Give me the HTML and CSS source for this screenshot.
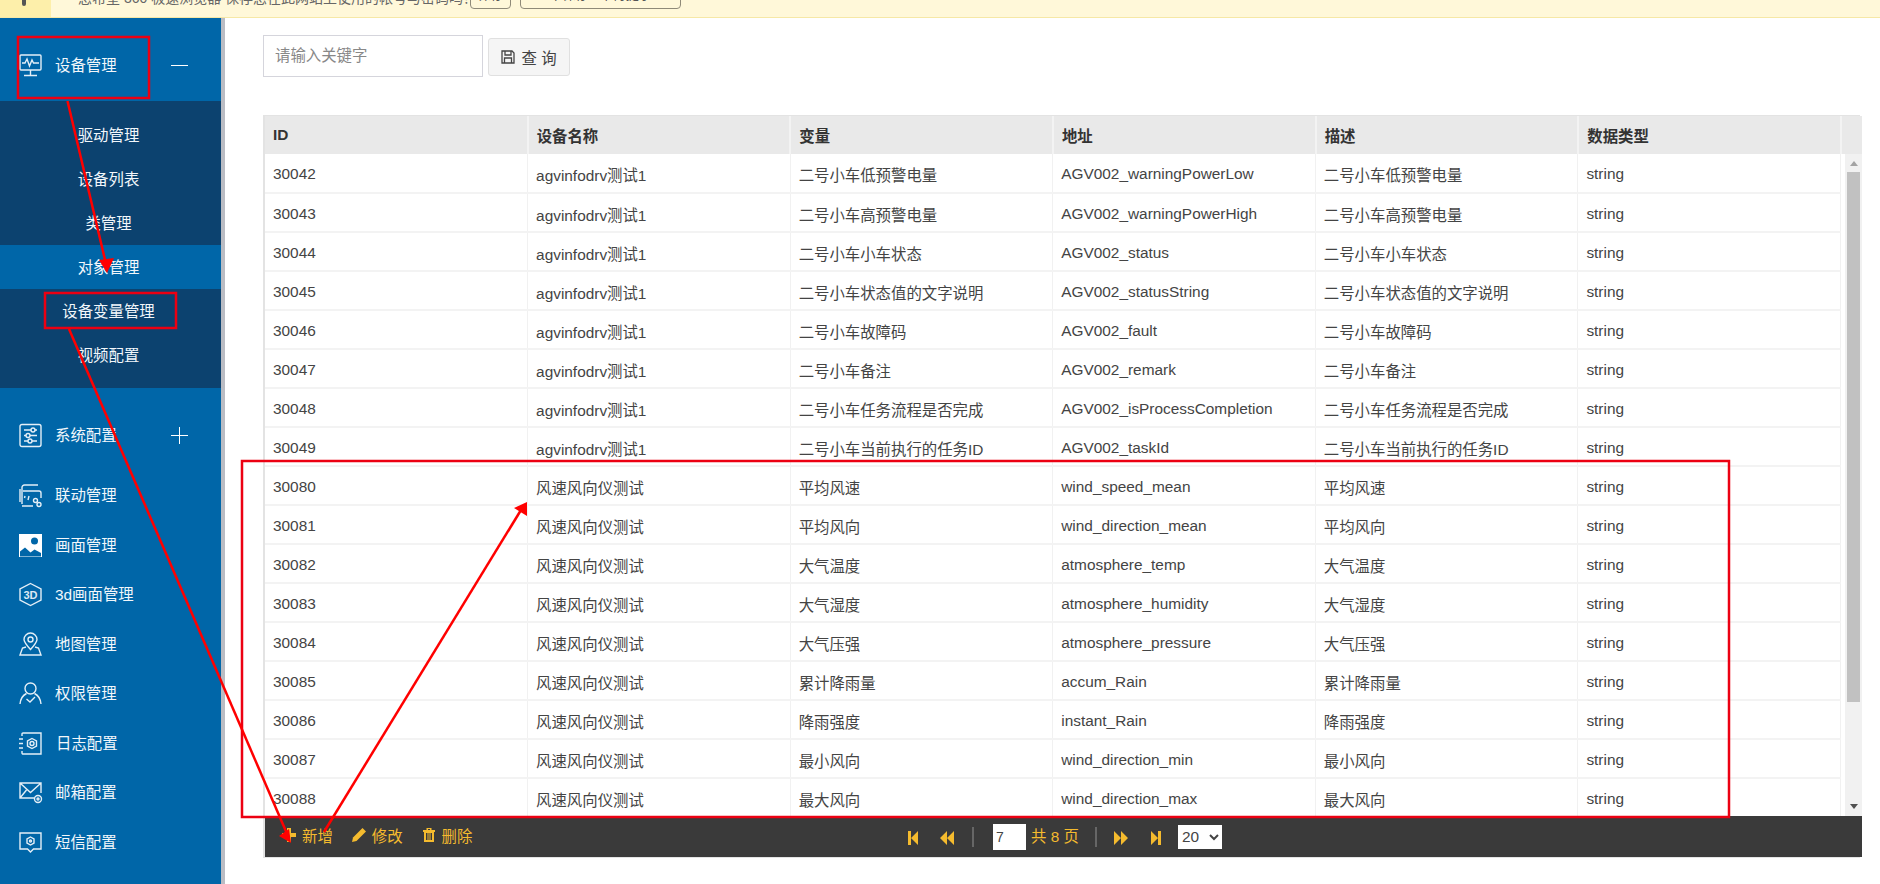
FILE: index.html
```html
<!DOCTYPE html>
<html lang="zh-CN">
<head>
    <meta charset="UTF-8">
    <meta name="viewport" content="width=device-width, initial-scale=1.0">
    <title>设备变量管理</title>
    <link rel="stylesheet" href="styles.css">
</head>
<body>
    <div class="aviso">
        <div class="aviso-icono"><span class="aviso-clip"></span></div>
        <div class="aviso-texto">您希望 360 极速浏览器 保存您在此网站上使用的帐号与密码吗？</div>
        <button class="aviso-boton aviso-corto">保存</button>
        <button class="aviso-boton aviso-largo">不保存 · 不再提示</button>
    </div>

    <div class="principal">
        <div class="menu">
            <div class="grupo">
                <svg class="icono" viewBox="0 0 23 23"><path d="M2 1h19a1 1 0 0 1 1 1v13a1 1 0 0 1-1 1H2a1 1 0 0 1-1-1V2a1 1 0 0 1 1-1zM11.500 16v5M5 21.500h13M3 9h3l2-4 2.500 7 2.500-6 1.500 3H20"/></svg>
                <span class="rotulo">设备管理</span>
                <span class="signo signo-menos"></span>
            </div>
            <div class="submenu">
                <div class="subitem">驱动管理</div>
                <div class="subitem">设备列表</div>
                <div class="subitem">类管理</div>
                <div class="subitem activo">对象管理</div>
                <div class="subitem">设备变量管理</div>
                <div class="subitem">视频配置</div>
            </div>
            <div class="grupo">
                <svg class="icono" viewBox="0 0 23 23"><path d="M3 0.500h17a2 2 0 0 1 2 2v18a2 2 0 0 1-2 2H3a2 2 0 0 1-2-2v-18a2 2 0 0 1 2-2zM5 6h13M5 11.500h13M5 17h13"/><circle class="relleno" cx="14" cy="6" r="2"/><circle class="relleno" cx="9" cy="11.500" r="2"/><circle class="relleno" cx="11" cy="17" r="2"/></svg>
                <span class="rotulo">系统配置</span>
                <span class="signo signo-mas"></span>
            </div>
            <div class="item">
                <svg class="icono" viewBox="0 0 23 23"><path d="M3 20V3.500A2.500 2.500 0 0 1 5.500 1H19M1 18V5M4 7h16a2 2 0 0 1 2 2v5M3 22h11M10 12l-1 4M6 12l-.5 2"/><circle cx="16.500" cy="16.500" r="2"/><circle cx="20" cy="20.500" r="2"/></svg>
                <span class="rotulo">联动管理</span>
            </div>
            <div class="item">
                <svg class="icono" viewBox="0 0 23 23"><path class="lleno" d="M0 0h23v23H0z"/><circle class="hueco" cx="15.500" cy="7" r="3.500"/><path class="hueco" d="M1 17.500l5-4 5.500 5 4-3 6.500 3.500v3.500H1z"/></svg>
                <span class="rotulo">画面管理</span>
            </div>
            <div class="item">
                <svg class="icono" viewBox="0 0 23 23"><path d="M11.500 0.500l10.500 5.500v11l-10.500 5.500L1 17V6z"/><text class="icono-3d" x="11.500" y="16">3D</text></svg>
                <span class="rotulo">3d画面管理</span>
            </div>
            <div class="item">
                <svg class="icono" viewBox="0 0 23 23"><path d="M11.500 16.500C7 11.500 5 9 5 6.500a6.500 6.500 0 0 1 13 0c0 2.500-2 5-6.500 10zM7 14l-3.500 1L1 22h21l-2.500-7L16 14"/><circle cx="11.500" cy="6.500" r="2.500"/></svg>
                <span class="rotulo">地图管理</span>
            </div>
            <div class="item">
                <svg class="icono" viewBox="0 0 23 23"><circle cx="11.500" cy="6.500" r="5.500"/><path d="M7.500 11.500C3.500 13.500 1.500 16 1 22M15.500 11.500c4 2 6 4.500 6.500 10.500M7.500 17l3.500 3 5-5"/></svg>
                <span class="rotulo">权限管理</span>
            </div>
            <div class="item">
                <svg class="icono" viewBox="0 0 23 23"><path d="M3 4V2a1 1 0 0 1 1-1h18v21H4a1 1 0 0 1-1-1v-2M0 7h4M0 11.500h4M0 16h4M13 6.500l4.500 2.500v5l-4.500 2.500L8.500 14V9z"/><circle cx="13" cy="11.500" r="2"/></svg>
                <span class="rotulo item-ajuste">日志配置</span>
            </div>
            <div class="item">
                <svg class="icono" viewBox="0 0 23 23"><path d="M15 17H1V2h21v10M1 2l10.500 9.500L22 2M1 17l6.500-8"/><circle cx="19" cy="18" r="3.500"/><circle cx="19" cy="18" r="1"/></svg>
                <span class="rotulo">邮箱配置</span>
            </div>
            <div class="item">
                <svg class="icono" viewBox="0 0 23 23"><path d="M1 2h21v16h-7.500l-3 3-3-3H1z"/><path d="M11.500 6l3.500 2v4l-3.500 2L8 12V8z"/><circle cx="11.500" cy="10" r="1"/></svg>
                <span class="rotulo">短信配置</span>
            </div>
        </div>

        <div class="contenido">
            <div class="busqueda">
                <input class="campo" type="text" placeholder="请输入关键字">
                <button class="boton-consulta">
                    <svg class="icono-disco" viewBox="0 0 14 14"><path d="M1 1h10l2 2v10H1zM4 1v4h6V1M3.500 13V8h7v5"/></svg>
                    查 询
                </button>
            </div>

            <div class="rejilla">
                <table class="cabecera">
                    <tr>
                        <th>ID</th>
                        <th>设备名称</th>
                        <th>变量</th>
                        <th>地址</th>
                        <th>描述</th>
                        <th>数据类型</th>
                        <th class="celda-vacia"></th>
                    </tr>
                </table>
                <div class="cuerpo">
                    <table class="filas">
                        <tr><td>30042</td><td>agvinfodrv测试1</td><td>二号小车低预警电量</td><td>AGV002_warningPowerLow</td><td>二号小车低预警电量</td><td>string</td></tr>
                        <tr><td>30043</td><td>agvinfodrv测试1</td><td>二号小车高预警电量</td><td>AGV002_warningPowerHigh</td><td>二号小车高预警电量</td><td>string</td></tr>
                        <tr><td>30044</td><td>agvinfodrv测试1</td><td>二号小车小车状态</td><td>AGV002_status</td><td>二号小车小车状态</td><td>string</td></tr>
                        <tr><td>30045</td><td>agvinfodrv测试1</td><td>二号小车状态值的文字说明</td><td>AGV002_statusString</td><td>二号小车状态值的文字说明</td><td>string</td></tr>
                        <tr><td>30046</td><td>agvinfodrv测试1</td><td>二号小车故障码</td><td>AGV002_fault</td><td>二号小车故障码</td><td>string</td></tr>
                        <tr><td>30047</td><td>agvinfodrv测试1</td><td>二号小车备注</td><td>AGV002_remark</td><td>二号小车备注</td><td>string</td></tr>
                        <tr><td>30048</td><td>agvinfodrv测试1</td><td>二号小车任务流程是否完成</td><td>AGV002_isProcessCompletion</td><td>二号小车任务流程是否完成</td><td>string</td></tr>
                        <tr><td>30049</td><td>agvinfodrv测试1</td><td>二号小车当前执行的任务ID</td><td>AGV002_taskId</td><td>二号小车当前执行的任务ID</td><td>string</td></tr>
                        <tr><td>30080</td><td>风速风向仪测试</td><td>平均风速</td><td>wind_speed_mean</td><td>平均风速</td><td>string</td></tr>
                        <tr><td>30081</td><td>风速风向仪测试</td><td>平均风向</td><td>wind_direction_mean</td><td>平均风向</td><td>string</td></tr>
                        <tr><td>30082</td><td>风速风向仪测试</td><td>大气温度</td><td>atmosphere_temp</td><td>大气温度</td><td>string</td></tr>
                        <tr><td>30083</td><td>风速风向仪测试</td><td>大气湿度</td><td>atmosphere_humidity</td><td>大气湿度</td><td>string</td></tr>
                        <tr><td>30084</td><td>风速风向仪测试</td><td>大气压强</td><td>atmosphere_pressure</td><td>大气压强</td><td>string</td></tr>
                        <tr><td>30085</td><td>风速风向仪测试</td><td>累计降雨量</td><td>accum_Rain</td><td>累计降雨量</td><td>string</td></tr>
                        <tr><td>30086</td><td>风速风向仪测试</td><td>降雨强度</td><td>instant_Rain</td><td>降雨强度</td><td>string</td></tr>
                        <tr><td>30087</td><td>风速风向仪测试</td><td>最小风向</td><td>wind_direction_min</td><td>最小风向</td><td>string</td></tr>
                        <tr><td>30088</td><td>风速风向仪测试</td><td>最大风向</td><td>wind_direction_max</td><td>最大风向</td><td>string</td></tr>
                    </table>
                    <div class="barra">
                        <span class="flecha-arriba"></span>
                        <span class="barra-pulgar"></span>
                        <span class="flecha-abajo"></span>
                    </div>
                </div>
                <div class="pie">
                    <div class="acciones">
                        <span class="accion">
                            <svg class="icono-pie" viewBox="0 0 14 14"><path d="M5 0h4v5h5v4H9v5H5V9H0V5h5z"/></svg>
                            新增
                        </span>
                        <span class="accion">
                            <svg class="icono-pie" viewBox="0 0 14 14"><path d="M10.500 0l3.500 3.500-9.500 9.500L0 14l1-4.500z"/></svg>
                            修改
                        </span>
                        <span class="accion">
                            <svg class="icono-pie" viewBox="0 0 14 14"><path fill-rule="evenodd" d="M4.500 0h5v2H13v2h-1v10H2V4H1V2h3.500zM6 1v1h2V1zM4 5v7h1.500V5zM6.500 5v7h1V5zM8.500 5v7H10V5z"/></svg>
                            删除
                        </span>
                    </div>
                    <div class="paginador">
                        <svg class="icono-pag pag-primero" viewBox="0 0 10 14"><path d="M0 0h3v14H0zM10 0v14L3 7z"/></svg>
                        <svg class="icono-pag pag-doble" viewBox="0 0 14 14"><path d="M7 0v14L0 7zM14 0v14L7 7z"/></svg>
                        <span class="separador"></span>
                        <input class="pagina" type="text" value="7">
                        <span class="total">共 8 页</span>
                        <span class="separador separador-fin"></span>
                        <svg class="icono-pag pag-doble" viewBox="0 0 14 14"><path d="M0 0v14l7-7zM7 0v14l7-7z"/></svg>
                        <svg class="icono-pag pag-ultimo" viewBox="0 0 10 14"><path d="M0 0v14l7-7zM7 0h3v14H7z"/></svg>
                        <select class="tamano"><option>20</option></select>
                    </div>
                    <div></div>
                </div>
            </div>
        </div>
    </div>

    <!-- marcas rojas dibujadas encima de la captura -->
    <svg class="marcas" viewBox="0 0 1880 884">
        <rect x="18" y="37" width="131" height="61"/>
        <rect x="45" y="293" width="131" height="35"/>
        <rect x="242" y="461" width="1487" height="356"/>
        <path d="M67.500 101L106 264"/>
        <path d="M69 329L288 836"/>
        <path d="M324 832L521 510"/>
        <polygon points="107,273 99,260 114,258"/>
        <polygon points="291,843 279,836 289,829"/>
        <polygon points="527,502 514,508 527,516"/>
    </svg>
</body>
</html>
```

FILE: styles.css
```css
* {
    box-sizing: border-box;
}

body {
    font-family: "Liberation Sans", "Noto Sans CJK SC", sans-serif;
    font-size: 15.4px;
    background-color: #fff;
    margin: 0;
    padding: 0;
    color: #444;
    width: 1880px;
    height: 884px;
    overflow: hidden;
    display: flex;
    flex-direction: column;
    position: relative;
}

/* aviso de arriba, casi todo cortado */
.aviso {
    height: 18px;
    flex: none;
    display: flex;
    align-items: flex-end;
    background-color: #fff8d9;
    border-bottom: 1px solid #f6e8a6;
    overflow: hidden;
    color: #666;
}

.aviso-icono {
    width: 51px;
    height: 17px;
    flex: none;
    background-color: #fdefaa;
    display: flex;
    justify-content: center;
}

.aviso-clip {
    width: 4px;
    height: 6px;
    background-color: #555;
    border-radius: 0 0 2px 2px;
    margin-right: 3px;
}

.aviso-texto {
    margin: 0 0 9px 27px;
    width: 392px;
    white-space: nowrap;
    overflow: hidden;
    font-size: 14px;
    line-height: 20px;
}

.aviso-boton {
    height: 28px;
    margin-bottom: 8px;
    padding: 0;
    font: inherit;
    font-size: 13px;
    line-height: 20px;
    color: #555;
    background-color: #fff8d9;
    border: 1px solid #8f8a78;
    border-radius: 4px;
    overflow: hidden;
    white-space: nowrap;
}

.aviso-corto {
    width: 41px;
    margin-left: 0;
}

.aviso-largo {
    width: 161px;
    margin-left: 9px;
}

.principal {
    flex: 1;
    display: flex;
    min-height: 0;
}

/* menu lateral */
.menu {
    width: 225px;
    flex: none;
    background-color: #0066a8;
    border-right: 4px solid #babcc3;
    color: #f2f7fb;
}

.grupo {
    height: 83px;
    padding: 11px 0 0 19px;
    display: flex;
    align-items: center;
    position: relative;
}

.item {
    height: 49.5px;
    padding-left: 19px;
    display: flex;
    align-items: center;
}

.rotulo {
    padding-bottom: 3px;
}

.icono {
    width: 23px;
    height: 23px;
    margin-right: 13px;
    flex: none;
    fill: none;
    stroke: #e4eff7;
    stroke-width: 1.4;
    overflow: visible;
}

.icono .relleno {
    fill: #0066a8;
}

.icono .lleno {
    fill: #fff;
    stroke: none;
}

.icono .hueco {
    fill: #0066a8;
    stroke: none;
}

.icono-3d {
    font-size: 11px;
    font-weight: bold;
    text-anchor: middle;
    fill: #dbe9f3;
    stroke: none;
}

.item-ajuste {
    margin-left: 1px;
}

.signo {
    position: absolute;
    left: 171px;
    top: 47px;
    width: 17px;
    height: 1px;
    background-color: #fff;
}

.signo-mas::after {
    content: "";
    position: absolute;
    left: 8px;
    top: -8px;
    width: 1px;
    height: 17px;
    background-color: #fff;
}

.submenu {
    height: 287px;
    background-color: #0c426f;
    padding-top: 12px;
}

.subitem {
    height: 44px;
    line-height: 46px;
    text-align: center;
    padding-right: 4px;
}

.subitem.activo {
    background-color: #0066a8;
}

/* contenido */
.contenido {
    flex: 1;
    min-width: 0;
    padding: 17px 0 0 38px;
}

.busqueda {
    display: flex;
    align-items: flex-start;
    gap: 5px;
}

.campo {
    width: 220px;
    height: 42px;
    padding: 0 11px;
    border: 1px solid #d5d5dc;
    font: inherit;
    color: #444;
    outline: none;
}

.campo::placeholder {
    color: #888;
}

.boton-consulta {
    width: 82px;
    height: 38px;
    margin-top: 3px;
    padding: 0;
    background-color: #f5f5f5;
    border: 1px solid #e0e0e0;
    border-radius: 3px;
    font: inherit;
    color: #444;
    display: flex;
    align-items: center;
    justify-content: center;
    gap: 6px;
}

.icono-disco {
    width: 14px;
    height: 14px;
    fill: none;
    stroke: #444;
    stroke-width: 1.3;
}

.rejilla {
    width: 1597px;
    height: 743px;
    margin-top: 38px;
    border-top: 1px solid #e3e3e3;
    border-left: 2px solid #e3e3e3;
    border-bottom: 1px solid #e3e3e3;
}

table {
    border-collapse: collapse;
    table-layout: fixed;
}

.cabecera {
    width: 1597px;
    background-color: #e9e9e9;
}

th {
    width: 262.67px;
    height: 38px;
    padding: 0 8px;
    text-align: left;
    font-weight: bold;
    color: #333;
    border-right: 2px solid #f3f3f3;
}

th.celda-vacia {
    width: 21px;
    padding: 0;
    border-right: none;
}

.cuerpo {
    width: 1597px;
    height: 662px;
    display: flex;
    overflow: hidden;
}

.filas {
    width: 1576px;
    flex: none;
    align-self: flex-start;
}

td {
    height: 39px;
    padding: 2px 8px 0;
    border-right: 1px solid #f1f1f1;
    border-bottom: 2px solid #f3f3f3;
    white-space: nowrap;
}

.barra {
    width: 17px;
    margin-left: 4px;
    background-color: #f1f1f1;
    display: flex;
    flex-direction: column;
    align-items: center;
}

.flecha-arriba {
    margin: 7px 0 6px;
    border: 4px solid transparent;
    border-top: none;
    border-bottom: 5px solid #a3a3a3;
}

.barra-pulgar {
    width: 13px;
    height: 530px;
    background-color: #c1c1c1;
}

.flecha-abajo {
    margin-top: auto;
    margin-bottom: 7px;
    border: 4px solid transparent;
    border-bottom: none;
    border-top: 5px solid #505050;
}

.pie {
    width: 1597px;
    height: 41px;
    background-color: #3a3a3a;
    color: #f5bb2e;
    display: grid;
    grid-template-columns: 1fr auto 1fr;
    align-items: center;
}

.acciones {
    display: flex;
    align-items: center;
    padding-left: 17px;
    padding-bottom: 3px;
}

.accion {
    display: flex;
    align-items: center;
    gap: 6px;
    margin-right: 19px;
}

.icono-pie {
    width: 14px;
    height: 14px;
    fill: #f5bb2e;
}

.paginador {
    display: flex;
    align-items: center;
    padding-left: 3px;
}

.icono-pag {
    height: 14px;
    margin-top: 3px;
    fill: #f5bb2e;
}

.pag-primero {
    width: 10px;
    margin-right: 22px;
}

.pag-ultimo {
    width: 10px;
    margin-left: 23px;
    margin-right: 17px;
}

.pag-doble {
    width: 14px;
}

.separador {
    width: 2px;
    height: 20px;
    background-color: #666;
    margin: 0 19px 0 18px;
}

.separador-fin {
    margin: 0 17px;
}

.pagina {
    width: 33px;
    height: 26px;
    padding: 0 3px;
    border: none;
    outline: none;
    font: inherit;
    font-size: 14px;
    color: #444;
}

.total {
    margin-left: 5px;
    width: 47px;
    padding-bottom: 3px;
    white-space: nowrap;
}

.tamano {
    width: 44px;
    height: 24px;
    border: none;
    outline: none;
    background-color: #fff;
    font: inherit;
    color: #444;
}

/* marcas rojas */
.marcas {
    position: absolute;
    left: 0;
    top: 0;
    width: 1880px;
    height: 884px;
    pointer-events: none;
    fill: none;
    stroke: #f00;
    stroke-width: 2.5;
}

.marcas rect {
    stroke: #ec0012;
}

.marcas polygon {
    fill: #f00;
    stroke: none;
}
```
